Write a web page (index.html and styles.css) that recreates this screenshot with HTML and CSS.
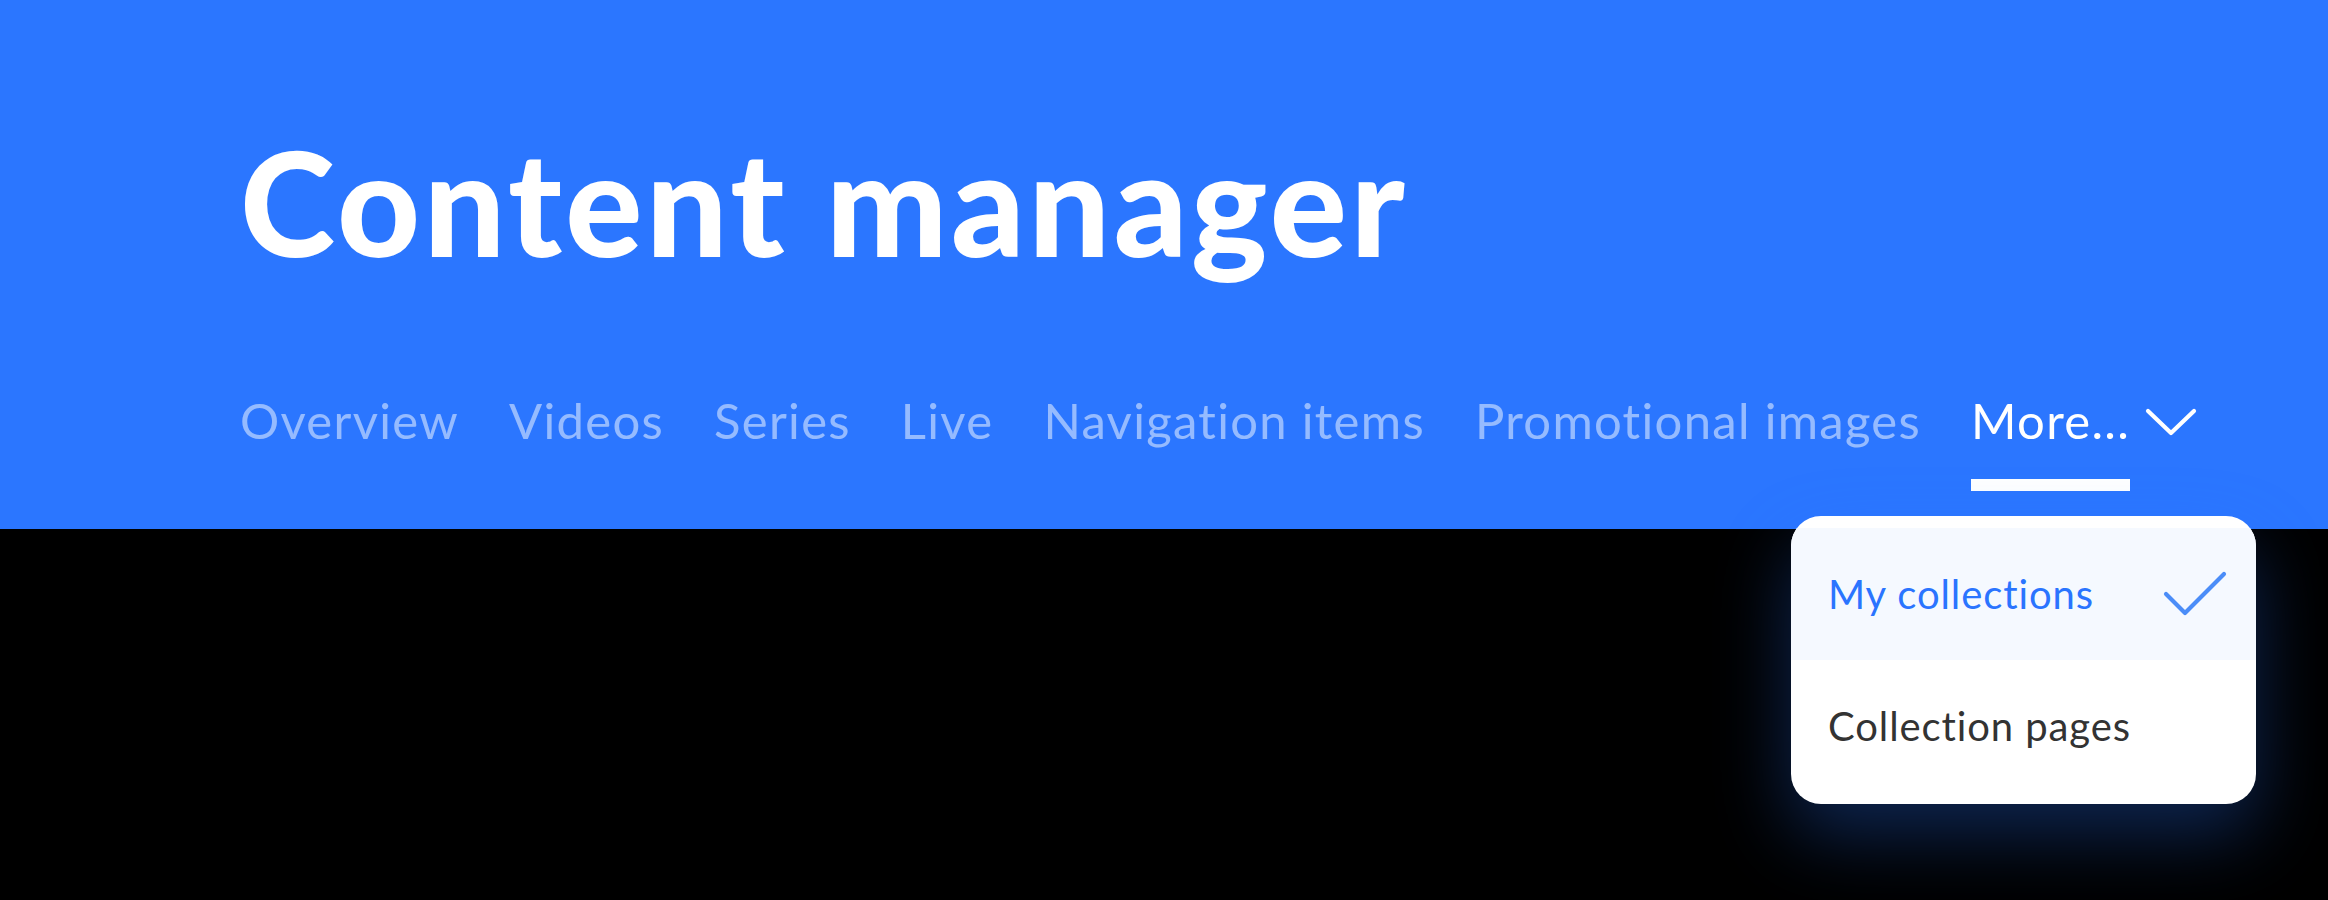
FILE: index.html
```html
<!DOCTYPE html>
<html lang="en">
<head>
<meta charset="utf-8">
<title>Content manager</title>
<link rel="stylesheet" href="styles.css">
</head>
<body>
<header class="hero">
  <h1 class="title">Content manager</h1>
  <nav class="tabs">
    <a class="tab"><span class="tab-label">Overview</span><span class="tab-bar"></span></a>
    <a class="tab"><span class="tab-label">Videos</span><span class="tab-bar"></span></a>
    <a class="tab"><span class="tab-label">Series</span><span class="tab-bar"></span></a>
    <a class="tab"><span class="tab-label">Live</span><span class="tab-bar"></span></a>
    <a class="tab"><span class="tab-label">Navigation items</span><span class="tab-bar"></span></a>
    <a class="tab"><span class="tab-label">Promotional images</span><span class="tab-bar"></span></a>
    <a class="tab tab-more active">
      <span class="tab-row">
        <span class="tab-text">More...<span class="tab-bar"></span></span>
        <svg class="chevron" width="54" height="30" viewBox="0 0 54 30" aria-hidden="true"><path d="M4 4 L27 26 L50 4" fill="none" stroke="#ffffff" stroke-width="4.2" stroke-linecap="round" stroke-linejoin="round"/></svg>
      </span>
    </a>
  </nav>
</header>
<div class="menu">
  <div class="menu-item selected">
    <span>My collections</span>
    <svg class="check" width="64" height="46" viewBox="0 0 64 46" aria-hidden="true"><path d="M3 23 L22 42 L61 3" fill="none" stroke="#4b8df8" stroke-width="4.2" stroke-linecap="round" stroke-linejoin="round"/></svg>
  </div>
  <div class="menu-item">
    <span>Collection pages</span>
  </div>
</div>
</body>
</html>
```
FILE: styles.css
```css
html, body {
  margin: 0;
  padding: 0;
}
body {
  background: #000000;
  font-family: "Lato", "Noto Sans", sans-serif;
  width: 2328px;
  height: 900px;
  overflow: hidden;
  position: relative;
}
.hero {
  background: #2b76ff;
  padding: 130px 0 38px 240px;
  display: flex;
  flex-direction: column;
  gap: 118px;
}
.title {
  margin: 0;
  font-size: 144px;
  line-height: 144px;
  font-weight: 900;
  color: #ffffff;
  letter-spacing: 3.6px;
  height: 144px;
}
.tabs {
  display: flex;
  gap: 50px;
  align-items: flex-start;
}
.tab {
  display: flex;
  flex-direction: column;
  gap: 31px;
  color: rgba(255, 255, 255, 0.5);
  font-size: 49px;
  line-height: 56px;
  letter-spacing: 1.3px;
  text-decoration: none;
  cursor: pointer;
}
.tab-label {
  display: block;
  height: 56px;
}
.tab-bar {
  display: block;
  height: 12px;
  background: transparent;
}
.tab-more {
  color: #ffffff;
}
.tab-row {
  display: flex;
  align-items: flex-start;
  gap: 8px;
}
.tab-text {
  display: flex;
  flex-direction: column;
  gap: 31px;
  padding-right: 6px;
}
.tab-more .tab-bar {
  background: #ffffff;
}
.chevron {
  display: block;
  margin-top: 15px;
}
.menu {
  position: absolute;
  left: 1791px;
  top: 516px;
  width: 465px;
  padding: 12px 0;
  background: #ffffff;
  border-radius: 30px;
  overflow: hidden;
  box-shadow: 0 30px 76px rgba(43, 118, 255, 0.32);
}
.menu-item {
  height: 132px;
  display: flex;
  align-items: center;
  justify-content: space-between;
  padding: 0 29px 0 37px;
  font-size: 40px;
  letter-spacing: 0.9px;
  color: #333333;
}
.menu-item.selected {
  background: #f5f9ff;
  color: #2a74ff;
}
.check {
  display: block;
}
```
